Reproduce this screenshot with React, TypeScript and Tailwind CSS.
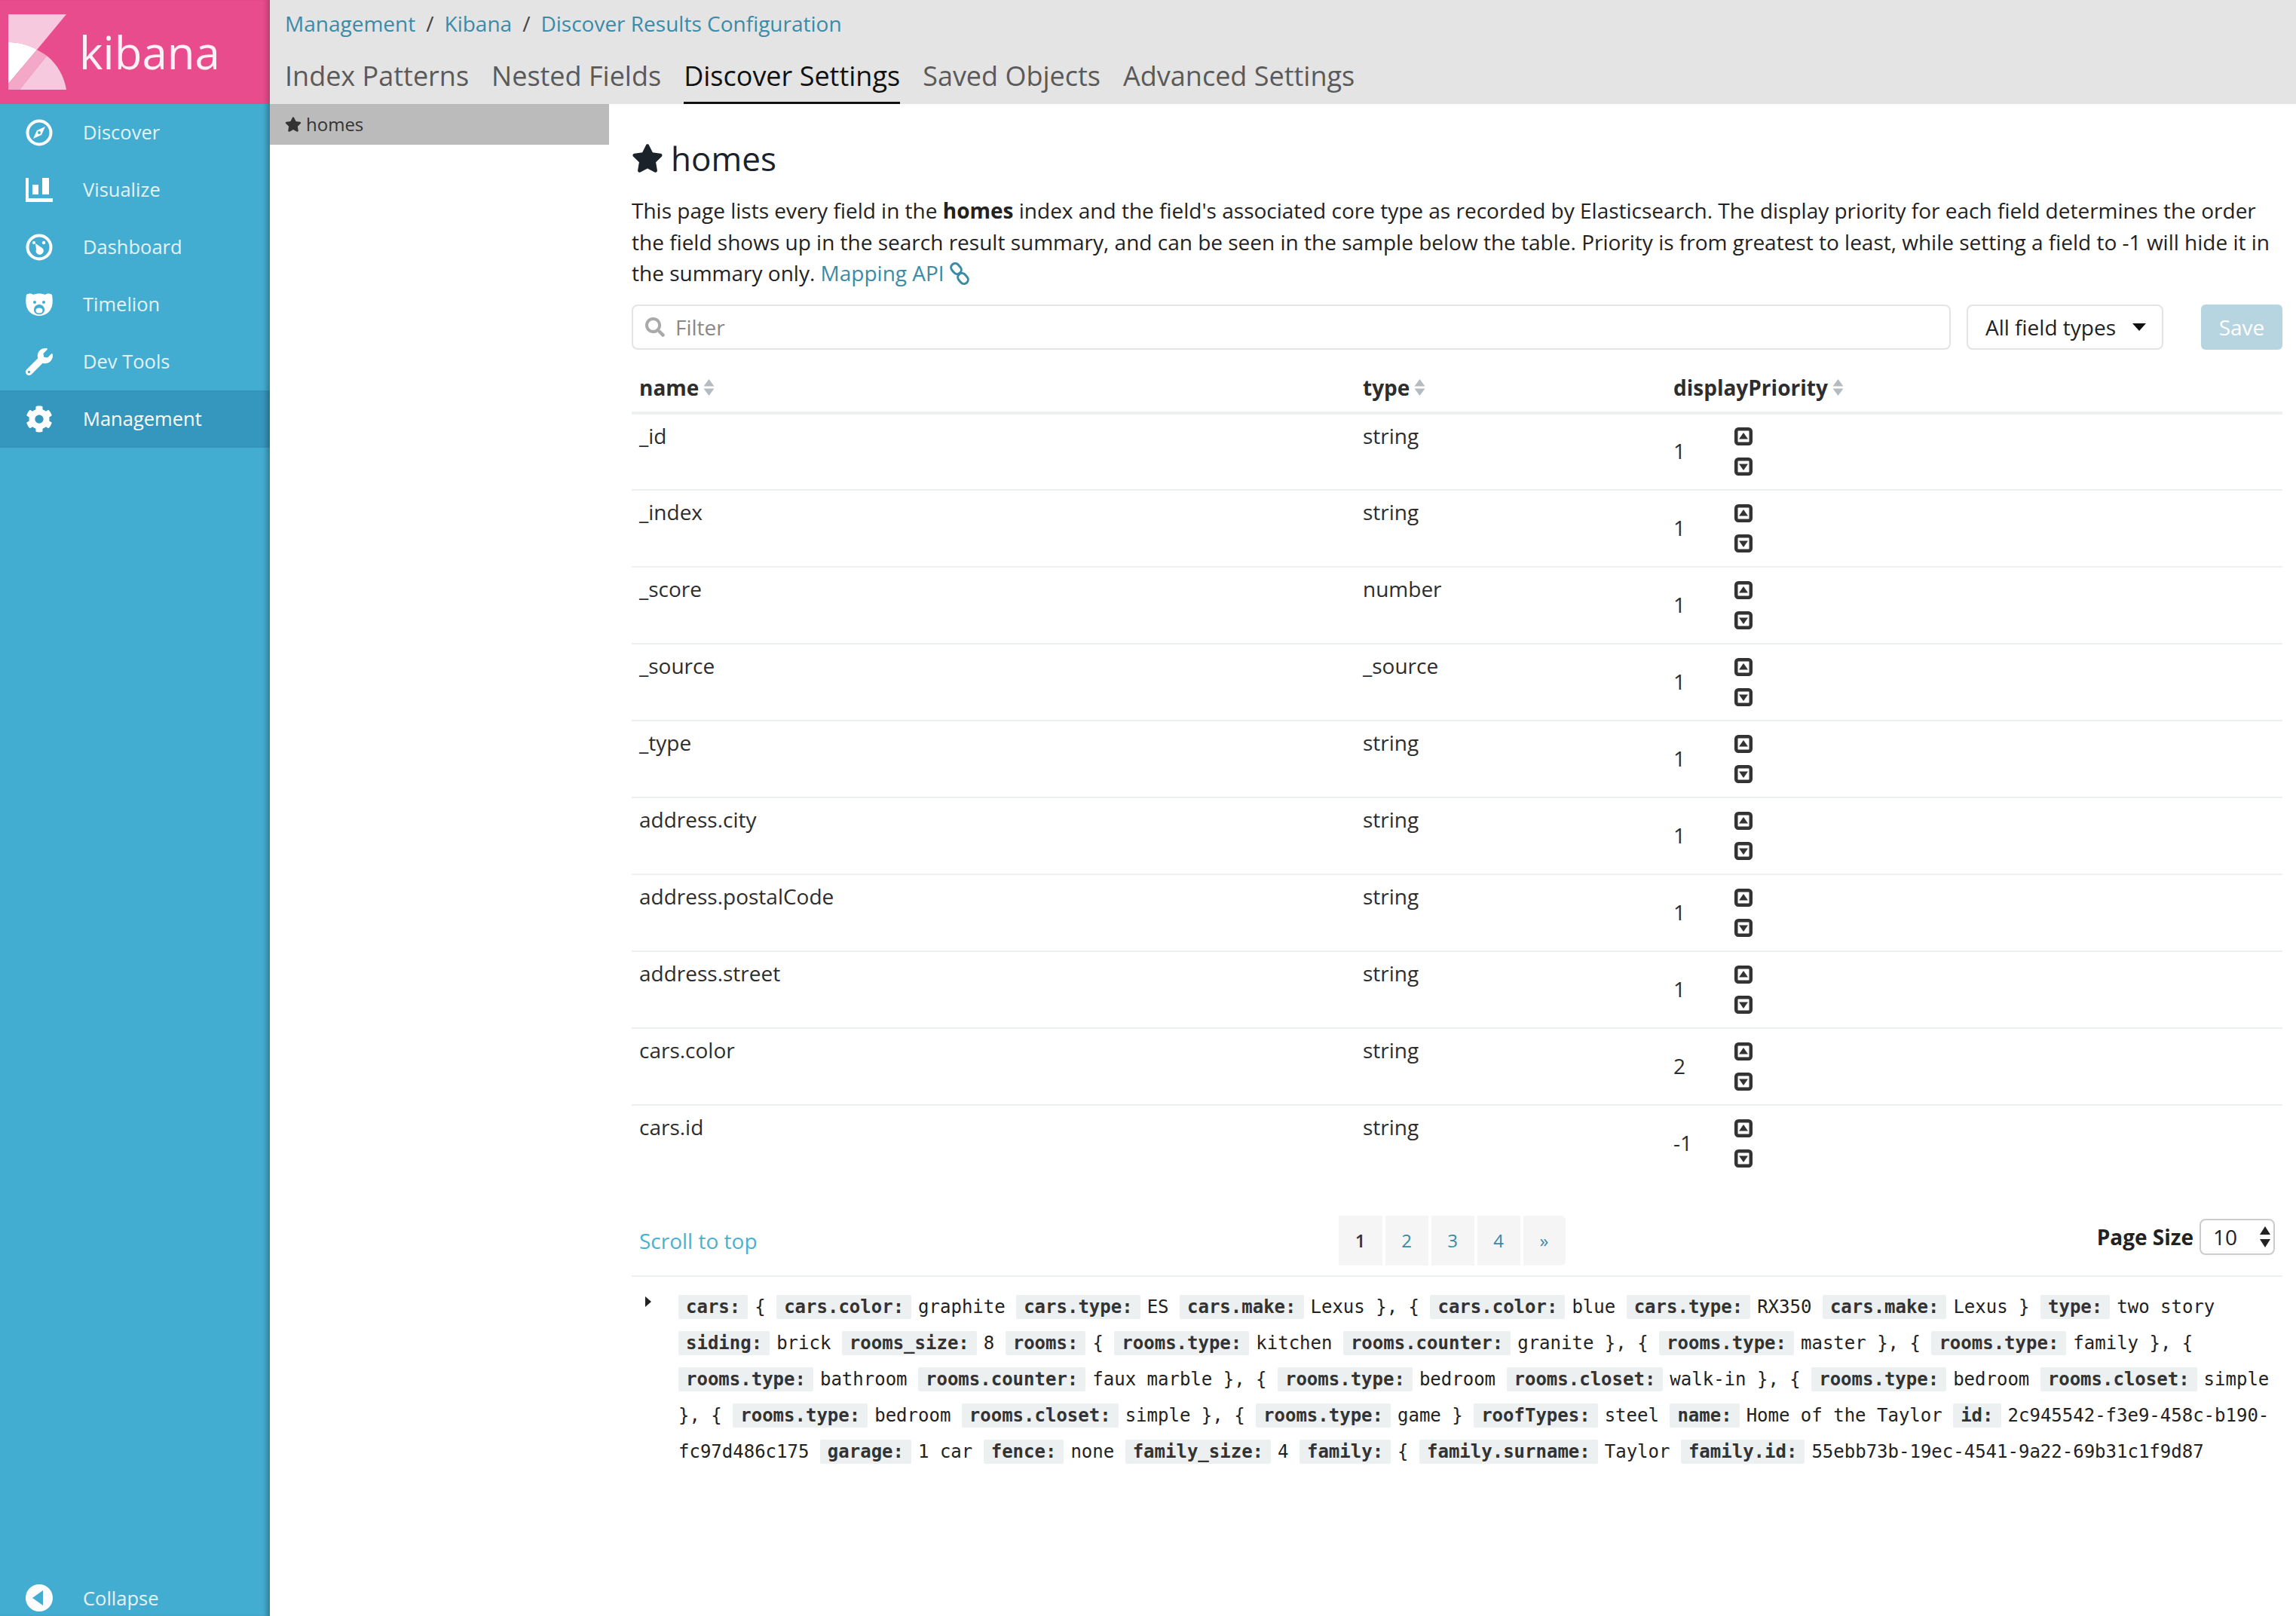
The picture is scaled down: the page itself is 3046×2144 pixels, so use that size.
import React from "react";
import { FaStar, FaCog, FaWrench, FaSearch } from "react-icons/fa";

const Compass = () => (
  <svg viewBox="0 0 36 36" className="w-9 h-9" fill="none">
    <circle cx="18" cy="18" r="15.5" stroke="white" strokeWidth="4" />
    <path d="M26 10 L21 21 L10 26 L15 15 Z" fill="white" />
    <circle cx="18" cy="18" r="2" fill="#43acd1" />
  </svg>
);
const Bars = () => (
  <svg viewBox="0 0 36 32" className="w-9 h-8" fill="white">
    <path d="M0 0h4v27h32v5H0z" />
    <rect x="9" y="9" width="8" height="13" />
    <rect x="22" y="0" width="9" height="22" />
  </svg>
);
const Dial = () => (
  <svg viewBox="0 0 36 36" className="w-9 h-9" fill="none">
    <circle cx="18" cy="18" r="15.5" stroke="white" strokeWidth="4" />
    <path d="M13 13 L22 19 A5 5 0 1 1 14 21 Z" fill="white" />
    <circle cx="24" cy="12" r="2.2" fill="white" />
    <circle cx="11" cy="12" r="2" fill="white" />
  </svg>
);
const Bear = () => (
  <svg viewBox="0 0 36 30" className="w-9 h-[30px]">
    <path fill="white" d="M1 2 C4 0 8 0 10 2 C15 0 21 0 26 2 C28 0 32 0 35 2 C36 8 36 12 35 17 C33 25 26 30 18 30 C10 30 3 25 1 17 C0 12 0 8 1 2 Z" />
    <circle cx="12" cy="12" r="2" fill="#43acd1" />
    <circle cx="24" cy="12" r="2" fill="#43acd1" />
    <path fill="#43acd1" d="M18 15 C22 15 25 18 25 22 C25 26 22 28 18 28 C14 28 11 26 11 22 C11 18 14 15 18 15 Z" />
    <ellipse cx="18" cy="23" rx="4.5" ry="3.5" fill="white" />
  </svg>
);
const Back = () => (
  <svg viewBox="0 0 36 36" className="w-9 h-9">
    <circle cx="18" cy="18" r="18" fill="white" />
    <path d="M9 18 L23 8 V28 Z" fill="#43acd1" />
  </svg>
);
const Logo = () => (
  <svg viewBox="0 0 77 100" className="w-[77px] h-[100px] shrink-0">
    <path d="M0 0H77L38 47 C28 41 14 37 0 37Z" fill="#f6c9de" />
    <path d="M0 37 C14 37 28 41 38 47 L0 92Z" fill="#ffffff" />
    <path d="M38 47 C42 49 47 52 51 55 L15 100H0V92Z" fill="#f4a8c7" />
    <path d="M51 55 C65 66 74 82 77 100H15Z" fill="#f6c9de" />
  </svg>
);
const Sort = () => (
  <svg viewBox="0 0 16 24" className="w-[17px] h-[24px] ml-[5px] inline-block" fill="#b4bcc2">
    <path d="M8 1 L15 10.500H1Z" />
    <path d="M8 23 L15 13.500H1Z" />
  </svg>
);
const Chain = () => (
  <svg viewBox="0 0 26 30" className="inline-block w-[26px] h-[30px] -mt-[6px] align-middle" fill="none" stroke="currentColor" strokeWidth="3">
    <rect x="1" y="3" width="15" height="11" rx="5.500" transform="rotate(50 8.500 8.500)" />
    <rect x="10" y="16" width="15" height="11" rx="5.500" transform="rotate(50 17.500 21.500)" />
  </svg>
);
const CaretBox = ({ up }: { up: boolean }) => (
  <svg viewBox="0 0 24 24" className="w-6 h-6 block">
    <rect x="2.250" y="2.250" width="19.500" height="19.500" rx="3" fill="none" stroke="#333" strokeWidth="4.500" />
    <path d={up ? "M12 7 L18 15.500H6Z" : "M12 17 L18 8.500H6Z"} fill="#333" />
  </svg>
);

const nav: [string, React.ReactNode][] = [
  ["Discover", <Compass />],
  ["Visualize", <Bars />],
  ["Dashboard", <Dial />],
  ["Timelion", <Bear />],
  ["Dev Tools", <FaWrench className="w-9 h-9 text-white" />],
  ["Management", <FaCog className="w-9 h-9 text-white" />],
];

const rows: [string, string, string][] = [
  ["_id", "string", "1"],
  ["_index", "string", "1"],
  ["_score", "number", "1"],
  ["_source", "_source", "1"],
  ["_type", "string", "1"],
  ["address.city", "string", "1"],
  ["address.postalCode", "string", "1"],
  ["address.street", "string", "1"],
  ["cars.color", "string", "2"],
  ["cars.id", "string", "-1"],
];

const doc: [string, string[]][] = [
  ["cars:", ["{"]],
  ["cars.color:", ["graphite"]],
  ["cars.type:", ["ES"]],
  ["cars.make:", ["Lexus }, {"]],
  ["cars.color:", ["blue"]],
  ["cars.type:", ["RX350"]],
  ["cars.make:", ["Lexus }"]],
  ["type:", ["two story"]],
  ["siding:", ["brick"]],
  ["rooms_size:", ["8"]],
  ["rooms:", ["{"]],
  ["rooms.type:", ["kitchen"]],
  ["rooms.counter:", ["granite }, {"]],
  ["rooms.type:", ["master }, {"]],
  ["rooms.type:", ["family }, {"]],
  ["rooms.type:", ["bathroom"]],
  ["rooms.counter:", ["faux marble }, {"]],
  ["rooms.type:", ["bedroom"]],
  ["rooms.closet:", ["walk-in }, {"]],
  ["rooms.type:", ["bedroom"]],
  ["rooms.closet:", ["simple", " ", "}, {"]],
  ["rooms.type:", ["bedroom"]],
  ["rooms.closet:", ["simple }, {"]],
  ["rooms.type:", ["game }"]],
  ["roofTypes:", ["steel"]],
  ["name:", ["Home of the Taylor"]],
  ["id:", ["2c945542-f3e9-458c-b190-", "fc97d486c175"]],
  ["garage:", ["1 car"]],
  ["fence:", ["none"]],
  ["family_size:", ["4"]],
  ["family:", ["{"]],
  ["family.surname:", ["Taylor"]],
  ["family.id:", ["55ebb73b-19ec-4541-9a22-69b31c1f9d87"]],
];

const tabs = ["Index Patterns", "Nested Fields", "Discover Settings", "Saved Objects", "Advanced Settings"];

export default function App() {
  return (
    <div className="flex w-[3046px] h-[2144px] overflow-hidden bg-white text-[28px] text-[#2d2d2d] font-['Open_Sans',sans-serif]">
      <aside className="w-[358px] shrink-0 flex flex-col bg-[#43acd1] shadow-[inset_-8px_0_6px_-4px_rgba(0,0,0,0.28)]">
        <div className="h-[138px] bg-[#e84c8c] flex items-center pl-[11px] gap-[17px] shadow-[inset_-8px_0_6px_-4px_rgba(0,0,0,0.2)]">
          <Logo />
          <span className="text-[60px] leading-none font-medium text-[#fdf1f6]">kibana</span>
        </div>
        {nav.map(([label, icon]) => (
          <div
            key={label}
            className={
              label === "Management"
                ? "h-[76px] flex items-center bg-[#3596be] shadow-[inset_-8px_0_6px_-4px_rgba(0,0,0,0.28)]"
                : "h-[76px] flex items-center"
            }
          >
            <span className="w-9 ml-[34px] flex justify-center">{icon}</span>
            <span className={label === "Management" ? "ml-[40px] -mt-[2px] text-[25.5px] text-white" : "ml-[40px] -mt-[2px] text-[25.5px] text-[#e3f3f9]"}>{label}</span>
          </div>
        ))}
        <div className="mt-auto -mb-[14px] h-[76px] flex items-center shrink-0">
          <span className="w-9 ml-[34px] flex justify-center"><Back /></span>
          <span className="ml-[40px] text-[25.5px] text-[#e3f3f9]">Collapse</span>
        </div>
      </aside>

      <div className="flex-1 flex flex-col min-w-0">
        <header className="h-[138px] bg-[#e4e4e4] pl-5 flex flex-col">
          <div className="flex items-center gap-[14px] h-[62px] text-[28px] text-[#3a8ba8]">
            <span>Management</span><span className="text-[#444]">/</span>
            <span>Kibana</span><span className="text-[#444]">/</span>
            <span>Discover Results Configuration</span>
          </div>
          <nav className="flex gap-[30px] text-[36px] text-[#5a5a5a] h-[76px]">
            {tabs.map((t) => (
              <div
                key={t}
                className={
                  t === "Discover Settings"
                    ? "h-full flex items-center pt-[5px] text-[#111] border-b-[3px] border-[#111]"
                    : "h-full flex items-center pt-[5px] border-b-[3px] border-transparent"
                }
              >
                {t}
              </div>
            ))}
          </nav>
        </header>

        <div className="flex flex-1 min-h-0">
          <div className="w-[450px] shrink-0">
            <div className="h-[54px] bg-[#bbbbbb] flex items-center pl-5 gap-[6px] text-[24px] text-[#333]">
              <FaStar className="w-[22px] h-[22px]" />
              <span>homes</span>
            </div>
          </div>

          <main className="flex-1 min-w-0 pl-[30px] pr-[18px]">
            <h1 className="flex items-center gap-[10px] mt-[42px] h-[60px] text-[44px] leading-none text-[#1b2229]">
              <FaStar className="w-[42px] h-[42px]" />
              <span>homes</span>
            </h1>
            <p className="mt-[19px] text-[28px] leading-[41.500px] text-[#222] whitespace-nowrap">
              This page lists every field in the <strong>homes</strong> index and the field's associated core type as recorded by Elasticsearch. The display priority for each field determines the order
              <br />
              the field shows up in the search result summary, and can be seen in the sample below the table. Priority is from greatest to least, while setting a field to -1 will hide it in
              <br />
              the summary only. <span className="text-[#3a8ba8]">Mapping API <Chain /></span>
            </p>

            <div className="flex items-center mt-[20px] h-[60px]">
              <div className="w-[1750px] h-full flex items-center border-2 border-[#e4e4e4] rounded-[8px] pl-4 gap-[14px]">
                <FaSearch className="w-[26px] h-[26px] text-[#aaa]" />
                <input placeholder="Filter" className="flex-1 outline-none text-[28px] placeholder:text-[#888]" />
              </div>
              <div className="ml-[21px] w-[261px] h-full flex items-center border-2 border-[#e4e4e4] rounded-[8px] pl-[23px] text-[#222]">
                All field types
                <svg viewBox="0 0 18 10" className="w-[18px] h-[10px] ml-[22px]"><path d="M0 0H18L9 10Z" fill="#111" /></svg>
              </div>
              <div className="ml-[50px] w-[108px] h-full flex items-center justify-center bg-[#b7d5e0] rounded-[6px] text-white">Save</div>
            </div>

            <table className="mt-[20px] w-full table-fixed border-collapse">
              <thead>
                <tr className="h-[64px] border-b-4 border-[#ecf0f1] font-bold text-left">
                  <th className="w-[960px] pl-[10px] pb-[2px]"><span className="flex items-center">name<Sort /></span></th>
                  <th className="w-[412px] pl-[10px] pb-[2px]"><span className="flex items-center">type<Sort /></span></th>
                  <th className="pl-[10px] pb-[2px]"><span className="flex items-center">displayPriority<Sort /></span></th>
                </tr>
              </thead>
              <tbody>
                {rows.map(([n, t, p]) => (
                  <tr key={n} className="h-[102px] border-b-2 border-[#ecf0f1] last:border-0">
                    <td className="pl-[10px] pt-[9px] align-top leading-[38px]">{n}</td>
                    <td className="pl-[10px] pt-[9px] align-top leading-[38px]">{t}</td>
                    <td className="pl-[10px]">
                      <div className="flex items-center">
                        <span className="w-[81px] -mt-[2px]">{p}</span>
                        <span className="flex flex-col gap-[16px]">
                          <CaretBox up />
                          <CaretBox up={false} />
                        </span>
                      </div>
                    </td>
                  </tr>
                ))}
              </tbody>
            </table>

            <div className="mt-[45px] h-[66px] grid grid-cols-[1fr_auto_1fr] items-center">
              <span className="pl-[10px] text-[#4ab0d1]">Scroll to top</span>
              <div className="flex gap-[4px] h-full text-[24px] text-[#3a8ba8] -ml-[14px]">
                {["1", "2", "3", "4", "»"].map((x) => (
                  <span
                    key={x}
                    className={
                      x === "1"
                        ? "w-[58px] flex items-center justify-center bg-[#f5f5f5] text-[#333] font-semibold"
                        : x === "»"
                          ? "w-[56px] flex items-center justify-center bg-[#f5f5f5] rounded-r-[6px]"
                          : "w-[57px] flex items-center justify-center bg-[#f5f5f5]"
                    }
                  >
                    {x}
                  </span>
                ))}
              </div>
              <div className="flex items-center justify-end gap-2 self-start mt-[4px] mr-[10px] h-[48px]">
                <span className="font-bold text-[#222]">Page Size</span>
                <span className="w-[100px] h-full flex items-center justify-between border-2 border-[#ccc] rounded-[8px] pl-4 pr-1 text-[#222]">
                  10
                  <svg viewBox="0 0 14 28" className="w-[14px] h-[28px]"><path d="M7 0L14 11H0ZM7 28L0 17H14Z" fill="#222" /></svg>
                </span>
              </div>
            </div>

            <div className="mt-[13px] border-t-2 border-[#ecf0f1] pt-[16px] flex">
              <svg viewBox="0 0 8 14" className="w-2 h-[14px] ml-[18px] mt-[10px] shrink-0"><path d="M0 0L8 7L0 14Z" fill="#222" /></svg>
              <div className="ml-[36px] min-w-0 font-['DejaVu_Sans_Mono',monospace] text-[24px] leading-[48px] text-[#222]">
                {doc.map(([k, parts], i) => (
                  <React.Fragment key={i}>
                    <span className="bg-[#ecf0f1] text-[#333] font-bold px-[10px] py-[2px] rounded-[2px] mr-[9px]">{k}</span>
                    {parts.map((v, j) => (v === " " ? " " : <span key={j}>{v}</span>))}{" "}
                  </React.Fragment>
                ))}
              </div>
            </div>
          </main>
        </div>
      </div>
    </div>
  );
}
